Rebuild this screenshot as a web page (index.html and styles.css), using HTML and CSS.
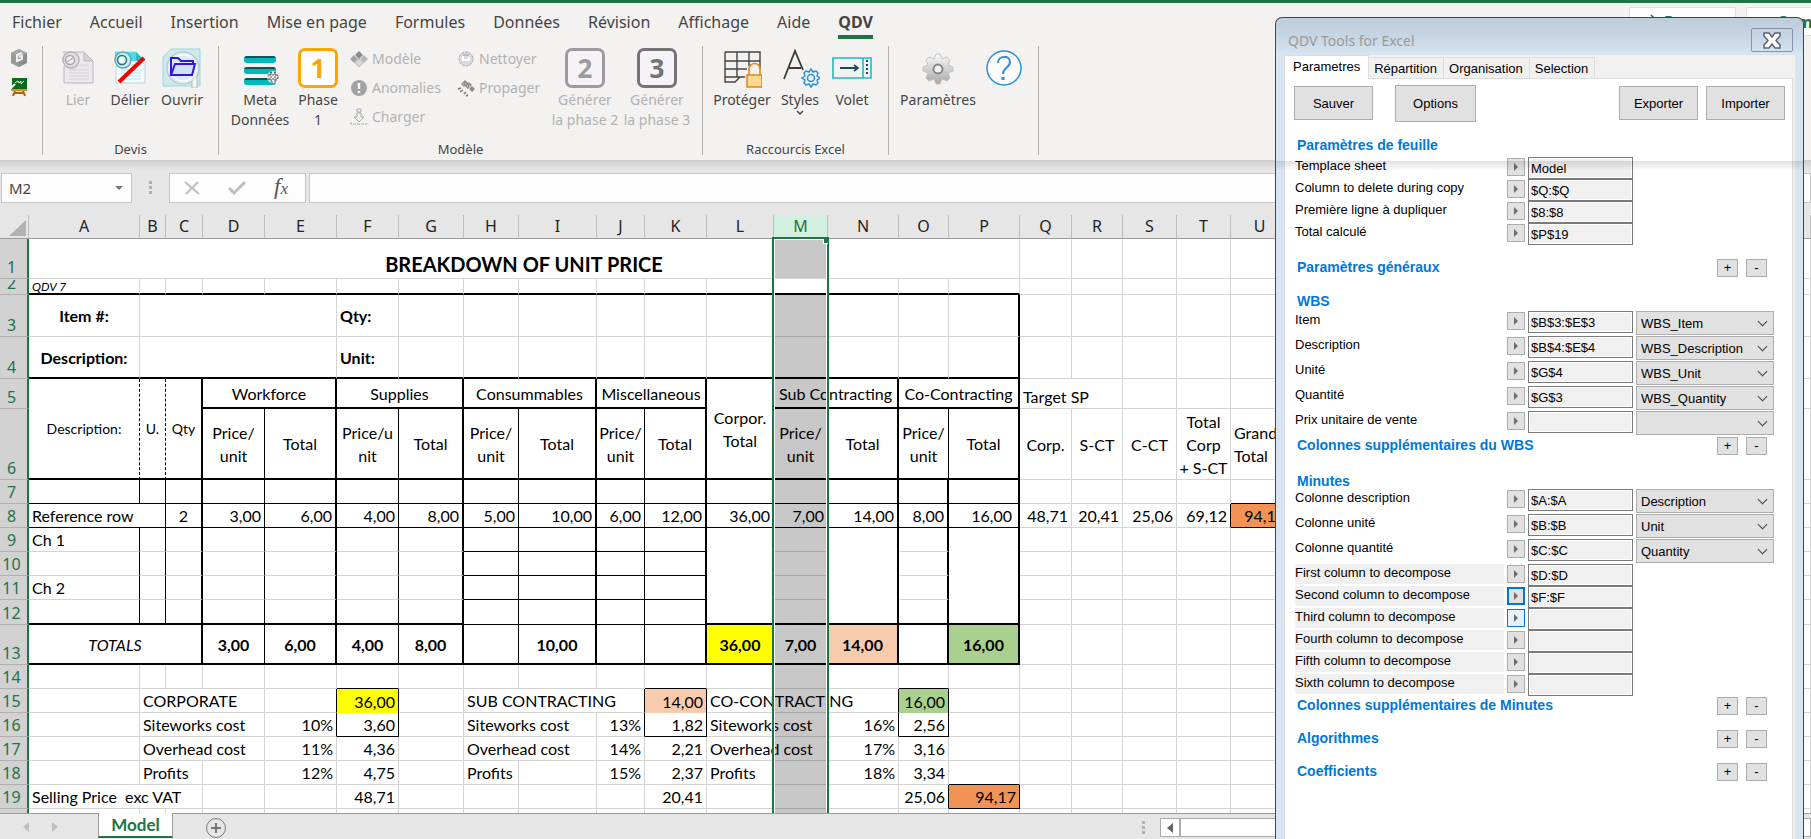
FILE: index.html
```html
<!DOCTYPE html>
<html lang="fr">
<head>
  <title>QDV Tools for Excel</title>
  <meta charset="UTF-8">
  <link rel="stylesheet" href="styles.css">
</head>
<body>
  <!-- Onglets -->
  <header class="tabs-bar">
    <nav class="menu">
      <a href="#">Fichier</a>
      <a href="#">Accueil</a>
      <a href="#">Insertion</a>
      <a href="#">Mise en page</a>
      <a href="#">Formules</a>
      <a href="#">Données</a>
      <a href="#">Révision</a>
      <a href="#">Affichage</a>
      <a href="#">Aide</a>
      <a href="#" class="active">QDV</a>
    </nav>
    <div class="share">
      <button type="button" class="share-btn">
        <svg width="16" height="16" viewBox="0 0 16 16" fill="none" stroke="#217346" stroke-width="1.5"><path d="M9 1l5 5-5 5M14 6H8c-3 0-5 2-5 5M1 8v7h11v-3"/></svg>
        Partager
      </button>
      <button type="button" class="share-btn">
        <svg width="16" height="16" viewBox="0 0 16 16" fill="none" stroke="#217346" stroke-width="1.5"><path d="M1 2h14v9H7l-3 3v-3H1z"/></svg>
        Commentaires
      </button>
    </div>
  </header>

  <!-- Ruban -->
  <div class="ribbon">
    <div class="group group-mini">
      <button type="button" class="mini" aria-label="Cube">
        <svg width="18" height="20" viewBox="0 0 18 20"><path d="M9 1l8 4v10l-8 4-8-4V5z" fill="#8d8d8d"/><path d="M9 1l8 4-8 4-8-4z" fill="#a9a9a9"/><path d="M1 5l8 4v10l-8-4z" fill="#9b9b9b"/><path d="M12 5L7 7v6l5-2V8l-3 1" fill="none" stroke="#eee" stroke-width="2"/></svg>
      </button>
      <button type="button" class="mini" aria-label="Tableau">
        <svg width="18" height="20" viewBox="0 0 18 20"><path d="M2 1h15v11H2z" fill="#0a6b1c"/><path d="M5 6l3-2 1 2 2-2v3l3-3" fill="none" stroke="#e8ffe8" stroke-width="1"/><path d="M1 12h16v2H1z" fill="#e08a2c"/><path d="M5 14l-2 5M13 14l2 5M5 16h8" stroke="#b25d12" stroke-width="2"/><path d="M1 11l4-4" stroke="#eee" stroke-width="2"/></svg>
      </button>
    </div>

    <div class="group group-devis">
      <div class="items">
        <button type="button" class="big" disabled>
          <svg width="40" height="40" viewBox="0 0 40 40"><path d="M5 4h21l9 9v22H6V18" fill="#ece9ee" stroke="#b9b6bb" stroke-width="1"/><path d="M26 4v9h9z" fill="#d4d1d6" stroke="#b9b6bb"/><path d="M11 22h20M11 25h20M11 28h20M11 31h20M21 17h10" stroke="#d3d0d5"/><circle cx="13" cy="12" r="8" fill="#e2e0e4" stroke="#b5b3b8" stroke-width="1.5"/><circle cx="12" cy="12" r="4.5" fill="#f1eff3" stroke="#a8a6ab" stroke-width="1.5"/><path d="M9 14l6-4" stroke="#b5b3b8" stroke-width="1.5"/></svg>
          <span>Lier</span>
        </button>
        <button type="button" class="big">
          <svg width="40" height="40" viewBox="0 0 40 40"><path d="M5 4h21l9 9v22H6V18" fill="#f4fdfd" stroke="#b5d6da" stroke-width="1"/><path d="M5 4h21v9H5z" fill="#4fdbe2"/><path d="M26 4v9h9z" fill="#2bb9c3"/><path d="M11 22h20M11 25h20M11 28h20M11 31h20M21 17h10" stroke="#b7e4e8"/><circle cx="13" cy="12" r="8" fill="#c4eef1" stroke="#5fa9b1" stroke-width="1.5"/><circle cx="12" cy="12" r="4.5" fill="#e8fafb" stroke="#2c6f77" stroke-width="1.5"/><path d="M9 34L34 10" stroke="#f60000" stroke-width="4"/></svg>
          <span>Délier</span>
        </button>
        <button type="button" class="big">
          <svg width="40" height="40" viewBox="0 0 40 40"><path d="M9 1h29v37H1V9z" fill="#cdeaee" stroke="#9cd5dd"/><circle cx="21" cy="20" r="16" fill="#e3f3f6" stroke="#b9c9cf" stroke-width="1.5"/><circle cx="21" cy="20" r="13" fill="#d9eef2" stroke="#fff"/><path d="M30 34v6h5V27" fill="#f5f8f9" stroke="#a9b8be"/><path d="M9 27V10h7l3 3h12v3" fill="none" stroke="#3612e6" stroke-width="2"/><path d="M9 27l4-11h20l-3 11z" fill="#cde5ee" stroke="#3612e6" stroke-width="2"/></svg>
          <span>Ouvrir</span>
        </button>
      </div>
      <p class="group-name">Devis</p>
    </div>

    <div class="group group-modele">
      <div class="items">
        <button type="button" class="big w64">
          <svg width="40" height="40" viewBox="0 0 40 40"><g fill="#00b9bd"><rect x="4" y="8" width="32" height="7" rx="3"/><rect x="4" y="19" width="32" height="7" rx="3"/><rect x="4" y="30" width="32" height="7" rx="3"/></g><g fill="#0b5458"><path d="M6 8h28l2 2H4zM6 19h28l2 2H4zM6 30h28l2 2H4z"/></g><circle cx="33" cy="29" r="6" fill="#f3f2f1"/><circle cx="33" cy="29" r="5" fill="none" stroke="#333" stroke-dasharray="2 2"/><path d="M29 27h8M29 31h8M31 25v8M35 25v8" stroke="#555" stroke-dasharray="2 1"/></svg>
          <span>Meta<br>Données</span>
        </button>
        <button type="button" class="big">
          <b class="phase phase-1">1</b>
          <span>Phase<br>1</span>
        </button>
        <div class="stack stack-1">
          <button type="button" class="small" disabled>
            <svg width="18" height="18" viewBox="0 0 18 18"><path d="M9 1l4 4-4 4-4-4z" fill="#8c8c8c"/><path d="M4 5l4 4-4 4-4-4z" fill="#a5a5a5"/><path d="M14 5l4 4-4 4-4-4z" fill="#b5b5b5"/><path d="M9 9l4 4-4 4-4-4z" fill="#d8d8d8" stroke="#bbb"/></svg>
            Modèle
          </button>
          <button type="button" class="small" disabled>
            <svg width="18" height="18" viewBox="0 0 18 18"><circle cx="9" cy="9" r="8" fill="#a3a3a3"/><path d="M9 4v6M9 12v2" stroke="#fff" stroke-width="2.4"/></svg>
            Anomalies
          </button>
          <button type="button" class="small" disabled>
            <svg width="18" height="18" viewBox="0 0 18 18" fill="none" stroke="#a8a8a8"><path d="M7 1h4v3H7zM7 5h4v4h3l-5 5-5-5h3z"/><path d="M1 14v2h16v-2" stroke-dasharray="3 1"/></svg>
            Charger
          </button>
        </div>
        <div class="stack stack-2">
          <button type="button" class="small" disabled>
            <svg width="18" height="18" viewBox="0 0 18 18"><circle cx="9" cy="9" r="7" fill="#dcdae0" stroke="#aaa" stroke-dasharray="3 1"/><path d="M6 6v4h6V7" fill="none" stroke="#fff" stroke-width="2"/><path d="M6 5h6" stroke="#999"/></svg>
            Nettoyer
          </button>
          <button type="button" class="small" disabled>
            <svg width="18" height="18" viewBox="0 0 18 18"><path d="M8 1l3 3-4 4-3-3zM12 3l3 3-4 4-3-3zM15 7l3 3-3 3-3-3z" fill="#8d8d8d"/><path d="M1 10l3-1M3 13l3-2M7 15l2-2M9 17l2-1" stroke="#777" stroke-width="1.5"/><path d="M6 5h4M10 7h4" stroke="#eee" stroke-dasharray="1 1"/></svg>
            Propager
          </button>
        </div>
        <button type="button" class="big w72" disabled>
          <b class="phase phase-2">2</b>
          <span>Générer<br>la phase 2</span>
        </button>
        <button type="button" class="big w72" disabled>
          <b class="phase phase-3">3</b>
          <span>Générer<br>la phase 3</span>
        </button>
      </div>
      <p class="group-name">Modèle</p>
    </div>

    <div class="group group-excel">
      <div class="items">
        <button type="button" class="big w60">
          <svg width="40" height="40" viewBox="0 0 40 40"><path d="M3 4h35v17M3 4v30h10l5-5h5M3 13h35M3 21h22M3 29h20M15 4v25M27 4v14" fill="none" stroke="#444" stroke-width="1.4"/><path d="M27 27v-6a5 5 0 0 1 11 0v6" fill="#f3f2f1" stroke="#e8831d" stroke-width="1.6"/><rect x="25" y="27" width="15" height="12" fill="#f9dc8f" stroke="#e07b12" stroke-width="1.4"/></svg>
          <span>Protéger</span>
        </button>
        <button type="button" class="big w56">
          <svg width="40" height="40" viewBox="0 0 40 40"><path d="M4 31L15 3l8 19M9 20h12" fill="none" stroke="#3b3b3b" stroke-width="1.8"/><path d="M31 21l2 3 3-1 2 2-1 3 3 2-3 2 1 3-2 2-3-1-2 3-2-3-3 1-2-2 1-3-3-2 3-2-1-3 2-2 3 1z" fill="#f3f2f1" stroke="#2b8fd6" stroke-width="1.5"/><circle cx="31" cy="30" r="3.5" fill="none" stroke="#2b8fd6" stroke-width="1.5"/></svg>
          <span>Styles</span>
          <svg width="8" height="6" viewBox="0 0 8 6"><path d="M1 1l3 3 3-3" fill="none" stroke="#444" stroke-width="1.5"/></svg>
        </button>
        <button type="button" class="big w48">
          <svg width="40" height="40" viewBox="0 0 40 40"><path d="M1 10h38v20H1zM31 10v20" fill="none" stroke="#19bcc4" stroke-width="1.6"/><path d="M8 20h17" stroke="#17495a" stroke-width="2"/><path d="M22 17l4 3-4 3" fill="none" stroke="#17495a" stroke-width="1.6"/><path d="M35 12v16" stroke="#17495a" stroke-width="2" stroke-dasharray="2 2"/></svg>
          <span>Volet</span>
        </button>
      </div>
      <p class="group-name">Raccourcis Excel</p>
    </div>

    <div class="group group-params">
      <div class="items">
        <button type="button" class="big w80">
          <svg width="40" height="40" viewBox="0 0 40 40"><defs><linearGradient id="steel" x1="0" y1="0" x2="0" y2="1"><stop offset="0" stop-color="#fafafa"/><stop offset="1" stop-color="#a8a8a8"/></linearGradient></defs><path d="M18 6h4l2 5 5-2 3 3-2 5 5 2v4l-5 2 2 5-3 3-5-2-2 5h-4l-2-5-5 2-3-3 2-5-5-2v-4l5-2-2-5 3-3 5 2z" fill="url(#steel)" stroke="#c2c2c2"/><circle cx="20" cy="21" r="4.5" fill="#f3f2f1" stroke="#808080" stroke-width="1.8"/></svg>
          <span>Paramètres</span>
        </button>
        <button type="button" class="big" aria-label="Aide">
          <svg width="40" height="40" viewBox="0 0 40 40" fill="none" stroke="#2b8fd6"><circle cx="20" cy="20" r="17" fill="#fafafa" stroke-width="1.5"/><path d="M14 15c0-8 12-8 12-1 0 6-7 5-7 12" stroke-width="2"/><path d="M19 29v3" stroke-width="3"/></svg>
        </button>
      </div>
    </div>
  </div>

  <!-- Barre de formule -->
  <div class="formula-bar">
    <div class="name-box">
      <input type="text" value="M2" aria-label="Zone Nom">
      <i class="caret"></i>
    </div>
    <span class="grip"></span>
    <div class="fx-box">
      <svg width="16" height="16" viewBox="0 0 16 16" fill="none" stroke="#bdbdbd" stroke-width="2"><path d="M1 2l14 12M14 2L2 14"/></svg>
      <svg width="18" height="16" viewBox="0 0 18 16" fill="none" stroke="#bdbdbd" stroke-width="3"><path d="M1 8l5 5L17 2"/></svg>
      <em class="fx">f<small>x</small></em>
    </div>
    <input type="text" class="formula" aria-label="Formule">
  </div>

  <!-- Feuille -->
  <main class="sheet">
    <table>
      <colgroup>
        <col class="w29"><col class="w111"><col class="w26"><col class="w37"><col class="w62"><col class="w72"><col class="w62"><col class="w65"><col class="w55"><col class="w78"><col class="w48"><col class="w62"><col class="w67"><col class="w54"><col class="w71"><col class="w50"><col class="w71"><col class="w52"><col class="w51"><col class="w54"><col class="w54"><col class="w58"><col>
      </colgroup>
      <thead>
        <tr>
          <th class="corner"><svg width="17" height="16" viewBox="0 0 17 16"><path d="M17 0v16H0z" fill="#b2b2b2"/></svg></th>
          <th>A</th><th>B</th><th>C</th><th>D</th><th>E</th><th>F</th><th>G</th><th>H</th><th>I</th><th>J</th><th>K</th><th>L</th>
          <th class="selected">M<div class="selection"><i class="handle"></i></div></th>
          <th>N</th><th>O</th><th>P</th><th>Q</th><th>R</th><th>S</th><th>T</th><th>U</th><th></th>
        </tr>
      </thead>
      <tbody>
        <tr class="h40">
          <th>1</th><td colspan="16" class="title">BREAKDOWN OF UNIT PRICE</td><td></td><td></td><td></td><td></td><td></td><td></td>
        </tr>
        <tr class="h16 row-b2">
          <th><div class="cut">2</div></th><td class="version">QDV 7</td><td></td><td></td><td></td><td></td><td></td><td></td><td></td><td></td><td></td><td></td><td></td><td></td><td></td><td></td><td></td><td></td><td></td><td></td><td></td><td></td><td></td>
        </tr>
        <tr class="h42">
          <th>3</th><td class="c bold">Item #:</td><td colspan="4"></td><td class="bold">Qty:</td><td></td><td></td><td></td><td></td><td></td><td></td><td></td><td></td><td></td><td class="r2"></td><td></td><td></td><td></td><td></td><td></td><td></td>
        </tr>
        <tr class="h42">
          <th>4</th><td class="c bold b2">Description:</td><td colspan="4" class="b2"></td><td class="bold b2">Unit:</td><td class="b2"></td><td class="b2"></td><td class="b2"></td><td class="b2"></td><td class="b2"></td><td class="b2"></td><td class="b2"></td><td class="b2"></td><td class="b2"></td><td class="b2 r2"></td><td></td><td></td><td></td><td></td><td></td><td></td>
        </tr>
        <tr class="h30">
          <th>5</th>
          <td rowspan="2" class="c sm dash b2">Description:</td><td rowspan="2" class="c sm dash b2">U.</td><td rowspan="2" class="c sm r2 b2">Qty</td>
          <td colspan="2" class="c r2 b2">Workforce</td><td colspan="2" class="c r2 b2">Supplies</td><td colspan="2" class="c r2 b2">Consummables</td><td colspan="2" class="c r2 b2">Miscellaneous</td>
          <td rowspan="2" class="c r1 b2">Corpor.<br>Total</td>
          <td colspan="2" class="c r2 b2">Sub Contracting</td><td colspan="2" class="c r2 b2">Co-Contracting</td>
          <td colspan="2" class="low">Target SP</td><td></td><td></td><td></td><td></td>
        </tr>
        <tr class="h71">
          <th>6</th>
          <td class="c r1 b2">Price/<br>unit</td><td class="c r2 b2">Total</td><td class="c r1 b2">Price/u<br>nit</td><td class="c r2 b2">Total</td><td class="c r1 b2">Price/<br>unit</td><td class="c r2 b2">Total</td><td class="c r1 b2">Price/<br>unit</td><td class="c r2 b2">Total</td>
          <td class="c r1 b2">Price/<br>unit</td><td class="c r2 b2">Total</td><td class="c r1 b2">Price/<br>unit</td><td class="c r2 b2">Total</td>
          <td class="c">Corp.</td><td class="c">S-CT</td><td class="c">C-CT</td><td class="c">Total<br>Corp<br>+ S-CT</td><td>Grand<br>Total</td><td></td>
        </tr>
        <tr>
          <th>7</th><td class="r1 b1"></td><td class="r1 b1"></td><td class="r2 b1"></td><td class="r1 b1"></td><td class="r2 b1"></td><td class="r1 b1"></td><td class="r2 b1"></td><td class="r1 b1"></td><td class="r2 b1"></td><td class="r1 b1"></td><td class="r2 b1"></td><td class="r1 b1"></td><td class="r1 b1"></td><td class="r2 b1"></td><td class="r2 b1"></td><td class="r2 b1"></td><td></td><td></td><td></td><td></td><td class="b1"></td><td></td>
        </tr>
        <tr>
          <th>8</th><td colspan="2" class="r1 b1">Reference row</td><td class="c r2 b1">2</td><td class="n r1 b1">3,00</td><td class="n r2 b1">6,00</td><td class="n r1 b1">4,00</td><td class="n r2 b1">8,00</td><td class="n r1 b1">5,00</td><td class="n r2 b1">10,00</td><td class="n r1 b1">6,00</td><td class="n r2 b1">12,00</td><td class="n r1 b1">36,00</td><td class="n r1 b1">7,00</td><td class="n r2 b1">14,00</td><td class="n r2 b1">8,00</td><td class="n indent r2 b1">16,00</td><td class="n">48,71</td><td class="n">20,41</td><td class="n">25,06</td><td class="n r1">69,12</td><td class="n orange r1 b1">94,17</td><td></td>
        </tr>
        <tr>
          <th>9</th><td class="r1">Ch 1</td><td class="r1"></td><td class="r2"></td><td class="r1"></td><td class="r2"></td><td class="r1"></td><td class="r2"></td><td class="r1 b1"></td><td class="r2 b1"></td><td class="r1 b1"></td><td class="r2 b1"></td><td rowspan="4" class="r1 b2"></td><td class="r1"></td><td rowspan="4" class="r2 b2"></td><td class="r2"></td><td rowspan="4" class="r2 b2"></td><td></td><td></td><td></td><td></td><td></td><td></td>
        </tr>
        <tr>
          <th>10</th><td class="r1"></td><td class="r1"></td><td class="r2"></td><td class="r1"></td><td class="r2"></td><td class="r1"></td><td class="r2"></td><td class="r1 b1"></td><td class="r2 b1"></td><td class="r1 b1"></td><td class="r2 b1"></td><td class="r1"></td><td class="r2"></td><td></td><td></td><td></td><td></td><td></td><td></td>
        </tr>
        <tr>
          <th>11</th><td class="r1">Ch 2</td><td class="r1"></td><td class="r2"></td><td class="r1"></td><td class="r2"></td><td class="r1"></td><td class="r2"></td><td class="r1 b1"></td><td class="r2 b1"></td><td class="r1 b1"></td><td class="r2 b1"></td><td class="r1"></td><td class="r2"></td><td></td><td></td><td></td><td></td><td></td><td></td>
        </tr>
        <tr class="h25">
          <th>12</th><td class="r1 b2"></td><td class="r1 b2"></td><td class="r2 b2"></td><td class="r1 b2"></td><td class="r2 b2"></td><td class="r1 b2"></td><td class="r2 b2"></td><td class="r1 b1"></td><td class="r2 b1"></td><td class="r1 b1"></td><td class="r2 b1"></td><td class="r1 b2"></td><td class="r2 b2"></td><td></td><td></td><td></td><td></td><td></td><td></td>
        </tr>
        <tr class="h40">
          <th>13</th><td colspan="3" class="c italic r2 b2">TOTALS</td><td class="c bold r1 b2">3,00</td><td class="c bold r2 b2">6,00</td><td class="c bold r1 b2">4,00</td><td class="c bold r2 b2">8,00</td><td class="r1 b2"></td><td class="c bold r2 b2">10,00</td><td class="r1 b2"></td><td class="r2 b2"></td><td class="c bold yellow r1 b2">36,00</td><td class="c bold r1 b2">7,00</td><td class="c bold peach r2 b2">14,00</td><td class="r2 b2"></td><td class="c bold green r2 b2">16,00</td><td></td><td></td><td></td><td></td><td></td><td></td>
        </tr>
        <tr>
          <th>14</th><td></td><td></td><td></td><td></td><td></td><td class="b1"></td><td></td><td></td><td></td><td></td><td class="b1"></td><td></td><td></td><td></td><td class="b1"></td><td></td><td></td><td></td><td></td><td></td><td></td><td></td>
        </tr>
        <tr>
          <th>15</th><td></td><td colspan="3">CORPORATE</td><td class="r1"></td><td class="n yellow b0 r1">36,00</td><td></td><td colspan="3" class="r1">SUB CONTRACTING</td><td class="n peach b0 r1">14,00</td><td colspan="3" class="r1">CO-CONTRACTING</td><td class="n green b0 r1">16,00</td><td></td><td></td><td></td><td></td><td></td><td></td><td></td>
        </tr>
        <tr>
          <th>16</th><td></td><td colspan="3">Siteworks cost</td><td class="n r1">10%</td><td class="n r1 b1">3,60</td><td></td><td colspan="2">Siteworks cost</td><td class="n r1">13%</td><td class="n r1 b1">1,82</td><td colspan="2">Siteworks cost</td><td class="n r1">16%</td><td class="n r1 b1">2,56</td><td></td><td></td><td></td><td></td><td></td><td></td><td></td>
        </tr>
        <tr>
          <th>17</th><td></td><td colspan="3">Overhead cost</td><td class="n">11%</td><td class="n">4,36</td><td></td><td colspan="2">Overhead cost</td><td class="n">14%</td><td class="n">2,21</td><td colspan="2">Overhead cost</td><td class="n">17%</td><td class="n">3,16</td><td></td><td></td><td></td><td></td><td></td><td></td><td></td>
        </tr>
        <tr>
          <th>18</th><td></td><td colspan="2">Profits</td><td></td><td class="n">12%</td><td class="n">4,75</td><td></td><td>Profits</td><td></td><td class="n">15%</td><td class="n">2,37</td><td>Profits</td><td></td><td class="n">18%</td><td class="n">3,34</td><td class="b1"></td><td></td><td></td><td></td><td></td><td></td><td></td>
        </tr>
        <tr>
          <th>19</th><td colspan="3">Selling Price&nbsp; exc VAT</td><td></td><td></td><td class="n">48,71</td><td></td><td></td><td></td><td></td><td class="n">20,41</td><td></td><td></td><td></td><td class="n r1">25,06</td><td class="n orange r1 b1">94,17</td><td></td><td></td><td></td><td></td><td></td><td></td>
        </tr>
        <tr>
          <th></th><td></td><td></td><td></td><td></td><td></td><td></td><td></td><td></td><td></td><td></td><td></td><td></td><td></td><td></td><td></td><td></td><td></td><td></td><td></td><td></td><td></td><td></td>
        </tr>
      </tbody>
    </table>
  </main>

  <footer class="sheet-tabs">
    <div class="arrows">
      <svg width="6" height="10" viewBox="0 0 6 10"><path d="M6 0v10L0 5z" fill="#c0c0c0"/></svg>
      <svg width="6" height="10" viewBox="0 0 6 10"><path d="M0 0v10l6-5z" fill="#c0c0c0"/></svg>
    </div>
    <button type="button" class="sheet-tab">Model</button>
    <button type="button" class="add-sheet" aria-label="Nouvelle feuille">
      <svg width="22" height="22" viewBox="0 0 22 22" fill="none" stroke="#777"><circle cx="11" cy="11" r="9.5"/><path d="M11 6v10M6 11h10" stroke-width="2"/></svg>
    </button>
    <div class="hscroll">
      <span class="grip"></span>
      <button type="button" class="scroll-left" aria-label="Gauche"><svg width="6" height="10" viewBox="0 0 6 10"><path d="M6 0v10L0 5z" fill="#666"/></svg></button>
      <div class="track"></div>
    </div>
  </footer>

  <!-- Boite de dialogue QDV -->
  <section class="dialog">
    <div class="dialog-title">
      <span>QDV Tools for Excel</span>
      <button type="button" class="close" aria-label="Fermer">
        <svg width="20" height="17" viewBox="0 0 20 17"><path d="M2 1h5l3 4 3-4h5v3l-4 4.500 4 4.500v3h-5l-3-4-3 4H2v-3l4-4.500L2 4z" fill="#fff" stroke="#5c6470" stroke-width="1.5"/></svg>
      </button>
    </div>
    <div class="dialog-body">
      <div class="dialog-tabs">
        <button type="button" class="on">Parametres</button>
        <button type="button">Répartition</button>
        <button type="button">Organisation</button>
        <button type="button">Selection</button>
      </div>
      <form class="page">
        <div class="toolbar">
          <button type="button" class="btn">Sauver</button>
          <button type="button" class="btn btn-options">Options</button>
          <button type="button" class="btn btn-export">Exporter</button>
          <button type="button" class="btn">Importer</button>
        </div>

        <div class="head head-sheet"><h2>Paramètres de feuille</h2></div>
        <div class="field"><label for="f1">Templace sheet</label><button type="button" class="pick" aria-label="Choisir"></button><input type="text" id="f1" value="Model"></div>
        <div class="field"><label for="f2">Column to delete during copy</label><button type="button" class="pick" aria-label="Choisir"></button><input type="text" id="f2" value="$Q:$Q"></div>
        <div class="field"><label for="f3">Première ligne à dupliquer</label><button type="button" class="pick" aria-label="Choisir"></button><input type="text" id="f3" value="$8:$8"></div>
        <div class="field"><label for="f4">Total calculé</label><button type="button" class="pick" aria-label="Choisir"></button><input type="text" id="f4" value="$P$19"></div>

        <div class="head head-general"><h2>Paramètres généraux</h2><button type="button" class="pm">+</button><button type="button" class="pm">-</button></div>

        <div class="head"><h2>WBS</h2></div>
        <div class="field tall"><label for="w1">Item</label><button type="button" class="pick" aria-label="Choisir"></button><input type="text" id="w1" value="$B$3:$E$3"><span class="combo"><select aria-label="Champ Item"><option>WBS_Item</option></select></span></div>
        <div class="field tall"><label for="w2">Description</label><button type="button" class="pick" aria-label="Choisir"></button><input type="text" id="w2" value="$B$4:$E$4"><span class="combo"><select aria-label="Champ Description"><option>WBS_Description</option></select></span></div>
        <div class="field tall"><label for="w3">Unité</label><button type="button" class="pick" aria-label="Choisir"></button><input type="text" id="w3" value="$G$4"><span class="combo"><select aria-label="Champ Unité"><option>WBS_Unit</option></select></span></div>
        <div class="field tall"><label for="w4">Quantité</label><button type="button" class="pick" aria-label="Choisir"></button><input type="text" id="w4" value="$G$3"><span class="combo"><select aria-label="Champ Quantité"><option>WBS_Quantity</option></select></span></div>
        <div class="field tall"><label for="w5">Prix unitaire de vente</label><button type="button" class="pick" aria-label="Choisir"></button><input type="text" id="w5"><span class="combo"><select aria-label="Champ Prix"><option></option></select></span></div>

        <div class="head head-extra"><h2>Colonnes supplémentaires du WBS</h2><button type="button" class="pm">+</button><button type="button" class="pm">-</button></div>

        <div class="head head-minutes"><h2>Minutes</h2></div>
        <div class="field tall"><label for="m1">Colonne description</label><button type="button" class="pick" aria-label="Choisir"></button><input type="text" id="m1" value="$A:$A"><span class="combo"><select aria-label="Champ description"><option>Description</option></select></span></div>
        <div class="field tall"><label for="m2">Colonne unité</label><button type="button" class="pick" aria-label="Choisir"></button><input type="text" id="m2" value="$B:$B"><span class="combo"><select aria-label="Champ unité"><option>Unit</option></select></span></div>
        <div class="field tall"><label for="m3">Colonne quantité</label><button type="button" class="pick" aria-label="Choisir"></button><input type="text" id="m3" value="$C:$C"><span class="combo"><select aria-label="Champ quantité"><option>Quantity</option></select></span></div>
        <div class="field shade"><label for="d1">First column to decompose</label><button type="button" class="pick" aria-label="Choisir"></button><input type="text" id="d1" value="$D:$D"></div>
        <div class="field shade"><label for="d2">Second column to decompose</label><button type="button" class="pick focus" aria-label="Choisir"></button><input type="text" id="d2" value="$F:$F"></div>
        <div class="field shade"><label for="d3">Third column to decompose</label><button type="button" class="pick hover" aria-label="Choisir"></button><input type="text" id="d3"></div>
        <div class="field shade"><label for="d4">Fourth column to decompose</label><button type="button" class="pick" aria-label="Choisir"></button><input type="text" id="d4"></div>
        <div class="field shade"><label for="d5">Fifth column to decompose</label><button type="button" class="pick" aria-label="Choisir"></button><input type="text" id="d5"></div>
        <div class="field shade"><label for="d6">Sixth column to decompose</label><button type="button" class="pick" aria-label="Choisir"></button><input type="text" id="d6"></div>

        <div class="head head-extra"><h2>Colonnes supplémentaires de Minutes</h2><button type="button" class="pm">+</button><button type="button" class="pm">-</button></div>
        <div class="head head-last"><h2>Algorithmes</h2><button type="button" class="pm">+</button><button type="button" class="pm">-</button></div>
        <div class="head head-last"><h2>Coefficients</h2><button type="button" class="pm">+</button><button type="button" class="pm">-</button></div>
      </form>
    </div>
  </section>
</body>
</html>
```
FILE: styles.css
```css
* {
  box-sizing: border-box;
}
body {
  margin: 0;
  height: 100vh;
  display: flex;
  flex-direction: column;
  overflow: hidden;
  position: relative;
  background-color: #e6e6e6;
  font-family: "Noto Sans", sans-serif;
  color: #444;
}
button, input, select {
  font-family: inherit;
  font-size: inherit;
  color: inherit;
  margin: 0;
  padding: 0;
  border: none;
  border-radius: 0;
  background: none;
}
svg {
  display: block;
}

/* onglets du ruban */
.tabs-bar {
  flex: none;
  height: 46px;
  border-top: 3px solid #217346;
  background-color: #f3f2f1;
  display: flex;
  overflow: hidden;
}
.menu {
  display: flex;
  gap: 28px;
  padding-left: 12px;
  font-size: 16px;
  line-height: 38px;
  white-space: nowrap;
}
.menu a {
  color: #444;
  text-decoration: none;
  height: 36px;
}
.menu .active {
  font-weight: bold;
  border-bottom: 4px solid #217346;
}
.share {
  margin-left: auto;
  margin-right: -84px;
  padding-top: 4px;
  display: flex;
  gap: 10px;
}
.share-btn {
  flex: none;
  width: 107px;
  height: 29px;
  display: flex;
  align-items: center;
  gap: 6px;
  padding-left: 12px;
  background-color: #fff;
  border: 1px solid #e1dfdd;
  border-radius: 2px;
  color: #217346;
  font-size: 16px;
  font-weight: bold;
}
.share-btn:last-child {
  width: 149px;
}

/* ruban */
.ribbon {
  flex: none;
  height: 114px;
  background-color: #f3f2f1;
  display: flex;
}
.group {
  flex: none;
  height: 109px;
  border-right: 1px solid #b1b1b1;
  display: flex;
  flex-direction: column;
}
.group-mini {
  width: 43px;
  padding: 2px 0 0 10px;
  gap: 9px;
}
.group-devis {
  width: 176px;
}
.group-modele {
  width: 484px;
}
.group-excel {
  width: 186px;
}
.group-params {
  width: 150px;
}
.items {
  display: flex;
  flex: 1;
  padding: 2px 0 0 9px;
}
.group-name {
  margin: 0;
  text-align: center;
  font-size: 13px;
  line-height: 12px;
}
.mini {
  width: 18px;
  height: 20px;
}
.big {
  width: 52px;
  flex: none;
  display: flex;
  flex-direction: column;
  align-items: center;
  font-size: 14px;
  line-height: 20px;
  white-space: nowrap;
}
.big span {
  padding-top: 2px;
}
.big:disabled, .small:disabled {
  color: #b1b1b1;
}
.w80 { width: 80px; }
.w72 { width: 72px; }
.w64 { width: 64px; }
.w60 { width: 60px; }
.w56 { width: 56px; }
.w48 { width: 48px; }
.phase {
  width: 40px;
  height: 40px;
  border: 3px solid;
  border-radius: 7px;
  font-size: 26px;
  line-height: 34px;
  text-align: center;
}
.phase-1 {
  color: #ffa500;
  background-color: #fff;
}
.phase-2 {
  color: #9d9b9f;
  background-color: #f5f2f8;
}
.phase-3 {
  color: #747375;
  background-color: #f5f2f8;
}
.stack {
  display: flex;
  flex-direction: column;
  font-size: 14px;
  padding-left: 6px;
}
.stack-1 {
  width: 107px;
}
.stack-2 {
  width: 98px;
}
.small {
  display: flex;
  align-items: center;
  gap: 4px;
  height: 29px;
  line-height: 20px;
  padding-bottom: 8px;
}

/* barre de formule */
.formula-bar {
  flex: none;
  height: 55px;
  padding: 13px 0 0 1px;
  display: flex;
  background: linear-gradient(#cdcdcd, #e6e6e6 10px);
}
.name-box, .fx-box, .formula {
  height: 30px;
  border: 1px solid #c6c6c6;
  background-color: #fdfdfd;
}
.name-box {
  width: 131px;
  display: flex;
  align-items: center;
  padding: 0 8px 0 7px;
}
.name-box input {
  width: 100px;
  flex: 1;
  font-size: 15px;
}
.caret {
  border: 4px solid transparent;
  border-top-color: #777;
  border-bottom: none;
}
.grip {
  width: 3px;
  height: 13px;
  margin: 8px 17px 0;
  background: repeating-linear-gradient(#b0b0b0 0 3px, transparent 3px 5px);
}
.fx-box {
  width: 137px;
  display: flex;
  align-items: center;
  gap: 28px;
  padding-left: 14px;
}
.fx {
  font-family: "Liberation Serif", serif;
  font-size: 23px;
  line-height: 24px;
  color: #555;
}
.fx small {
  font-size: 17px;
}
.formula {
  flex: 1;
  margin-left: 3px;
  padding: 0 6px;
}

/* feuille de calcul */
.sheet {
  flex: 1;
  min-height: 0;
  overflow: hidden;
  background-color: #fff;
}
table {
  width: 100%;
  table-layout: fixed;
  border-collapse: separate;
  border-spacing: 0;
  font-family: Lato, sans-serif;
  font-size: 16px;
  line-height: 23px;
  color: #000;
}
.w29 { width: 29px; }
.w111 { width: 111px; }
.w26 { width: 26px; }
.w37 { width: 37px; }
.w62 { width: 62px; }
.w65 { width: 65px; }
.w55 { width: 55px; }
.w78 { width: 78px; }
.w67 { width: 67px; }
.w54 { width: 54px; }
.w71 { width: 71px; }
.w50 { width: 50px; }
.w52 { width: 52px; }
.w51 { width: 51px; }
.w58 { width: 58px; }
tr { height: 24px; }
.h16 { height: 16px; }
.h25 { height: 25px; }
.h30 { height: 30px; }
.h40 { height: 40px; }
.h42 { height: 42px; }
.h71 { height: 71px; }
th {
  padding: 0;
  font-family: "Noto Sans", sans-serif;
  font-weight: normal;
}
thead th {
  position: relative;
  background-color: #e6e6e6;
  border-right: 1px solid #bdbdbd;
  border-bottom: 1px solid #9b9b9b;
  color: #222;
}
thead .corner svg {
  margin: 2px 0 0 9px;
}
thead .selected {
  background-color: #d2f0e0;
  color: #217346;
}
tbody th {
  background-color: #d2d2d2;
  border-right: 2px solid #217346;
  border-bottom: 1px solid #b1b1b1;
  color: #217346;
  vertical-align: bottom;
  line-height: 22px;
  padding-right: 4px;
}
.cut {
  height: 14px;
  overflow: hidden;
  display: flex;
  align-items: flex-end;
  justify-content: center;
}
td {
  padding: 0 3px;
  border-right: 1px solid #d4d4d4;
  border-bottom: 1px solid #d4d4d4;
  white-space: nowrap;
}
.r1 { border-right-color: #000; }
.r2 { border-right: 2px solid #000; }
.b0 { border-bottom: none; }
.b1 { border-bottom-color: #000; }
.b2 { border-bottom: 2px solid #000; }
.dash { border-right: 1px dashed #000; }
.row-b2 td:nth-child(-n+17) { border-bottom: 2px solid #000; }
.c { text-align: center; padding: 0; }
.n { text-align: right; }
.indent { padding-right: 6px; }
.sm { font-size: 14px; }
.low { vertical-align: bottom; }
.bold { font-weight: bold; }
.italic { font-style: italic; }
.yellow { background-color: #ff0; }
.peach { background-color: #f8cbad; }
.green { background-color: #a9d08e; }
.orange { background-color: #f09355; }
.title {
  text-align: center;
  vertical-align: bottom;
  font-size: 20px;
  font-weight: bold;
  line-height: 28px;
}
.h16 td {
  line-height: 13px;
}
.version {
  font-size: 12px;
  font-style: italic;
}

/* colonne M selectionnee, la cellule active reste blanche */
.selection {
  position: absolute;
  z-index: 1;
  top: calc(100% - 1px);
  left: -2px;
  right: -2px;
  height: 100vh;
  border: 2px solid #217346;
  box-shadow: inset 0 0 0 1px #fff;
  background: linear-gradient(rgba(0, 0, 0, 0.22) 39px, transparent 39px 54px, rgba(0, 0, 0, 0.22) 54px);
}
.handle {
  position: absolute;
  top: -1px;
  right: -2px;
  width: 5px;
  height: 5px;
  background-color: #217346;
  box-shadow: -1px 1px 0 #fff;
}

/* onglets de feuille */
.sheet-tabs {
  flex: none;
  height: 26px;
  border-top: 1px solid #9b9b9b;
  background-color: #e6e6e6;
  display: flex;
}
.arrows {
  width: 98px;
  padding: 8px 0 0 23px;
  display: flex;
  gap: 23px;
}
.sheet-tab {
  width: 75px;
  height: 25px;
  margin-top: -1px;
  background-color: #fff;
  border: 1px solid #9b9b9b;
  border-top: none;
  border-bottom: 2px solid #217346;
  color: #217346;
  font-family: Lato, sans-serif;
  font-size: 17px;
  font-weight: bold;
}
.add-sheet {
  margin: 3px 0 0 32px;
  width: 22px;
  height: 22px;
}
.hscroll {
  width: 669px;
  margin-left: auto;
  display: flex;
  padding-top: 4px;
}
.hscroll .grip {
  margin: 3px 15px 0 0;
}
.scroll-left {
  width: 20px;
  height: 19px;
  border: 1px solid #ababab;
  background-color: #fff;
  padding-left: 6px;
}
.track {
  flex: 1;
  height: 19px;
  border: 1px solid #ababab;
  background-color: #fff;
}

/* boite de dialogue */
.dialog {
  position: absolute;
  z-index: 5;
  top: 17px;
  right: 7px;
  bottom: 0;
  width: 529px;
  padding: 0 8px;
  border: 1px solid #444;
  border-bottom: none;
  border-radius: 7px 7px 0 0;
  background: linear-gradient(#bfcddb, #c6d5e3 18px, #d7e4f2 36px);
  display: flex;
  flex-direction: column;
  font-family: "Liberation Sans", sans-serif;
  font-size: 13px;
  color: #000;
}
/* reflet du bord du ruban */
.dialog::after {
  content: "";
  position: absolute;
  left: 0;
  right: 0;
  top: 143px;
  height: 10px;
  background: linear-gradient(rgba(0, 0, 0, 0.12), transparent);
  pointer-events: none;
}
.dialog-title {
  flex: none;
  height: 37px;
  display: flex;
  justify-content: space-between;
  padding: 10px 2px 0 4px;
  font-family: "Noto Sans", sans-serif;
  font-size: 14px;
  line-height: 26px;
  color: #999;
}
.close {
  width: 42px;
  height: 24px;
  border: 1px solid #8593ad;
  border-radius: 2px;
  display: flex;
  align-items: center;
  justify-content: center;
}
.dialog-body {
  flex: 1;
  background-color: #f0f0f0;
  padding-right: 2px;
  display: flex;
  flex-direction: column;
}
.dialog-tabs {
  display: flex;
  align-items: flex-end;
  height: 23px;
}
.dialog-tabs button {
  height: 21px;
  padding: 0 6px 0 5px;
  border: 1px solid #dcdcdc;
  border-left: none;
  border-bottom: none;
}
.dialog-tabs .on {
  position: relative;
  height: 24px;
  margin-bottom: -1px;
  padding: 0 8px 2px;
  background-color: #fff;
  border-left: 1px solid #dcdcdc;
}
.page {
  flex: 1;
  background-color: #fff;
  border: 1px solid #dcdcdc;
  border-bottom: none;
  padding: 6px 7px 0 10px;
}
.toolbar {
  display: flex;
  gap: 8px;
  margin: 0 0 15px -1px;
}
.btn {
  width: 79px;
  height: 34px;
  margin-top: 1px;
  background-color: #e1e1e1;
  border: 1px solid #adadad;
}
.btn-options {
  width: 81px;
  height: 37px;
  margin: 0 0 0 14px;
}
.btn-export {
  margin-left: auto;
}
.head {
  display: flex;
  gap: 8px;
  margin: 16px 0 2px;
  padding: 0 18px 0 2px;
}
.head h2 {
  flex: 1;
  margin: 0;
  font-size: 14px;
  line-height: 16px;
  color: #0078d7;
}
.head-sheet {
  margin: 0 0 4px;
}
.head-general {
  margin: 14px 0 0;
}
.head-extra {
  margin: 1px 0 0;
}
.head-minutes {
  margin: 18px 0 0;
}
.head-last {
  margin: 15px 0 0;
}
.pm {
  width: 21px;
  height: 18px;
  line-height: 14px;
  background-color: #e1e1e1;
  border: 1px solid #adadad;
}
.field {
  display: grid;
  grid-template-columns: 209px 18px 105px 138px;
  column-gap: 3px;
  align-items: start;
  height: 22px;
}
.tall {
  height: 25px;
}
.field label {
  line-height: 17px;
  height: 20px;
}
.shade label {
  background-color: #f0f0f0;
}
.field input {
  height: 22px;
  width: 100%;
  padding: 0 2px;
  border: 1px solid #7a7a7a;
  background-color: #f0f0f0;
  box-shadow: inset 0 0 0 1px #fff;
}
.pick {
  height: 18px;
  margin-top: 1px;
  background-color: #e1e1e1;
  border: 1px solid #adadad;
  display: flex;
  align-items: center;
  justify-content: center;
}
.pick::before {
  content: "";
  border: 4px solid transparent;
  border-left-color: #6d6d6d;
  border-right: none;
}
.focus {
  border: 2px solid #0078d7;
}
.hover {
  background-color: #e5f1fb;
  border-color: #0078d7;
}
.combo {
  position: relative;
}
.combo select {
  appearance: none;
  width: 100%;
  height: 24px;
  padding: 0 20px 0 4px;
  background-color: #e1e1e1;
  border: 1px solid #adadad;
}
.combo::after {
  content: "";
  position: absolute;
  right: 8px;
  top: 7px;
  width: 6px;
  height: 6px;
  border-right: 1px solid #444;
  border-bottom: 1px solid #444;
  transform: rotate(45deg);
  pointer-events: none;
}
```
